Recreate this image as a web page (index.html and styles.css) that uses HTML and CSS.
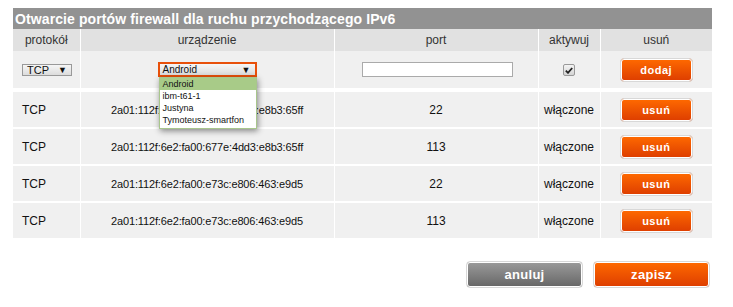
FILE: index.html
```html
<!DOCTYPE html>
<html lang="pl">
<head>
  <meta charset="UTF-8" />
  <title>Firewall IPv6</title>
  <link rel="stylesheet" href="styles.css">
</head>
<body>
  <table class="fw">
    <colgroup>
      <col class="c-proto">
      <col class="c-dev">
      <col class="c-port">
      <col class="c-act">
      <col class="c-del">
    </colgroup>
    <tr class="title-row">
      <th colspan="5">Otwarcie portów firewall dla ruchu przychodzącego IPv6</th>
    </tr>
    <tr class="head-row">
      <th>protokół</th>
      <th>urządzenie</th>
      <th>port</th>
      <th>aktywuj</th>
      <th>usuń</th>
    </tr>
    <tr class="new-row">
      <td class="left">
        <div class="fake-select proto">TCP <span class="arrow">▼</span></div>
      </td>
      <td>
        <div class="dev-wrap">
          <div class="fake-select device">Android <span class="arrow">▼</span></div>
          <ul class="dropdown">
            <li class="selected">Android</li>
            <li>ibm-t61-1</li>
            <li>Justyna</li>
            <li>Tymoteusz-smartfon</li>
          </ul>
        </div>
      </td>
      <td><input class="port-input" type="text"></td>
      <td>
        <span class="check">
          <svg width="8" height="7" viewBox="0 0 8 7"><path d="M0.8 3.6 L3 5.8 L7.2 1" fill="none" stroke="#222" stroke-width="1.8"/></svg>
        </span>
      </td>
      <td><button class="btn small">dodaj</button></td>
    </tr>
    <tr class="data-row">
      <td class="left">TCP</td>
      <td class="addr">2a01:112f:6e2:fa00:677e:4dd3:e8b3:65ff</td>
      <td>22</td>
      <td>włączone</td>
      <td><button class="btn small">usuń</button></td>
    </tr>
    <tr class="data-row">
      <td class="left">TCP</td>
      <td class="addr">2a01:112f:6e2:fa00:677e:4dd3:e8b3:65ff</td>
      <td>113</td>
      <td>włączone</td>
      <td><button class="btn small">usuń</button></td>
    </tr>
    <tr class="data-row">
      <td class="left">TCP</td>
      <td class="addr">2a01:112f:6e2:fa00:e73c:e806:463:e9d5</td>
      <td>22</td>
      <td>włączone</td>
      <td><button class="btn small">usuń</button></td>
    </tr>
    <tr class="data-row">
      <td class="left">TCP</td>
      <td class="addr">2a01:112f:6e2:fa00:e73c:e806:463:e9d5</td>
      <td>113</td>
      <td>włączone</td>
      <td><button class="btn small">usuń</button></td>
    </tr>
  </table>

  <div class="actions">
    <button class="btn big grey">anuluj</button>
    <button class="btn big">zapisz</button>
  </div>
</body>
</html>
```

FILE: styles.css
```css
body {
  font-family: "Liberation Sans", Arial, sans-serif;
  margin: 0;
  padding: 8px 0 0 13px;
  background: #fff;
  color: #111;
}

.fw {
  width: 699px;
  border-collapse: collapse;
  table-layout: fixed;
  font-size: 12px;
}

.c-proto { width: 67px; }
.c-dev { width: 254px; }
.c-port { width: 204px; }
.c-act { width: 62px; }
.c-del { width: 112px; }

.fw th, .fw td {
  padding: 0;
  text-align: center;
  border-right: 1px solid #fff;
}

.fw th:last-child, .fw td:last-child {
  border-right: none;
}

.title-row th {
  background: #929292;
  color: #fff;
  font-size: 14px;
  font-weight: bold;
  text-align: left;
  height: 21px;
  padding-left: 2px;
  letter-spacing: 0.1px;
}

.head-row th {
  background: #e1e1e1;
  color: #333;
  font-weight: normal;
  font-size: 12px;
  height: 22px;
}

.new-row td {
  background: #f0f0f0;
  height: 37px;
  border-bottom: 4px solid #fff;
}

.data-row td {
  background: #f0f0f0;
  height: 35px;
  border-bottom: 2px solid #fff;
}

.data-row:last-child td {
  border-bottom: none;
}

.fw td.left {
  text-align: left;
  padding-left: 9px;
}

.fw td.addr {
  font-size: 11px;
  letter-spacing: -0.15px;
}

.fake-select {
  display: flex;
  justify-content: space-between;
  align-items: center;
  box-sizing: border-box;
  font-size: 11px;
  color: #111;
  background: linear-gradient(#f6f6f6, #dcdcdc);
  text-align: left;
}

.fake-select .arrow {
  font-size: 9px;
}

.proto {
  width: 50px;
  height: 12px;
  border: 1px solid #999;
  padding: 0 4px;
}

.dev-wrap {
  position: relative;
  width: 99px;
  margin: 0 auto;
}

.device {
  width: 99px;
  height: 15px;
  border: 2px solid #e8500a;
  padding: 0 4px 0 3px;
  font-size: 10px;
}

.dropdown {
  position: absolute;
  top: 15px;
  left: 1px;
  width: 98px;
  margin: 0;
  padding: 0 0 2px;
  list-style: none;
  background: #fff;
  border: 1px solid #a8c68c;
  box-sizing: border-box;
  box-shadow: 1px 2px 6px rgba(0, 0, 0, 0.45);
  text-align: left;
  font-size: 9px;
  color: #111;
  z-index: 2;
}

.dropdown li {
  height: 12px;
  line-height: 12px;
  padding-left: 3px;
  white-space: nowrap;
}

.dropdown li.selected {
  background: #a8cb88;
}

.port-input {
  width: 151px;
  height: 15px;
  box-sizing: border-box;
  border: 1px solid #aaa;
  background: #fff;
  margin: 0;
  padding: 0;
  display: block;
  margin-left: 27px;
}

.check {
  display: inline-flex;
  align-items: center;
  justify-content: center;
  width: 10px;
  height: 10px;
  border: 1px solid #999;
  border-radius: 2px;
  background: linear-gradient(#f4f4f4, #d4d4d4);
  vertical-align: middle;
}

.btn {
  font-family: "Liberation Sans", Arial, sans-serif;
  font-weight: bold;
  color: #fff;
  border: 1px solid #d8d8d8;
  box-shadow: 0 0 0 1px #fff inset;
  border-radius: 4px;
  background: linear-gradient(#ff6a00, #dd3d00);
  cursor: pointer;
  padding: 0;
}

.btn.small {
  width: 73px;
  height: 24px;
  font-size: 11px;
  letter-spacing: 0.5px;
}

.btn.big {
  width: 117px;
  height: 27px;
  font-size: 13px;
  letter-spacing: 0.3px;
}

.btn.grey {
  background: linear-gradient(#9b9b9b, #666);
}

.actions {
  display: flex;
  justify-content: flex-end;
  gap: 10px;
  width: 697px;
  margin-top: 23px;
}
```
